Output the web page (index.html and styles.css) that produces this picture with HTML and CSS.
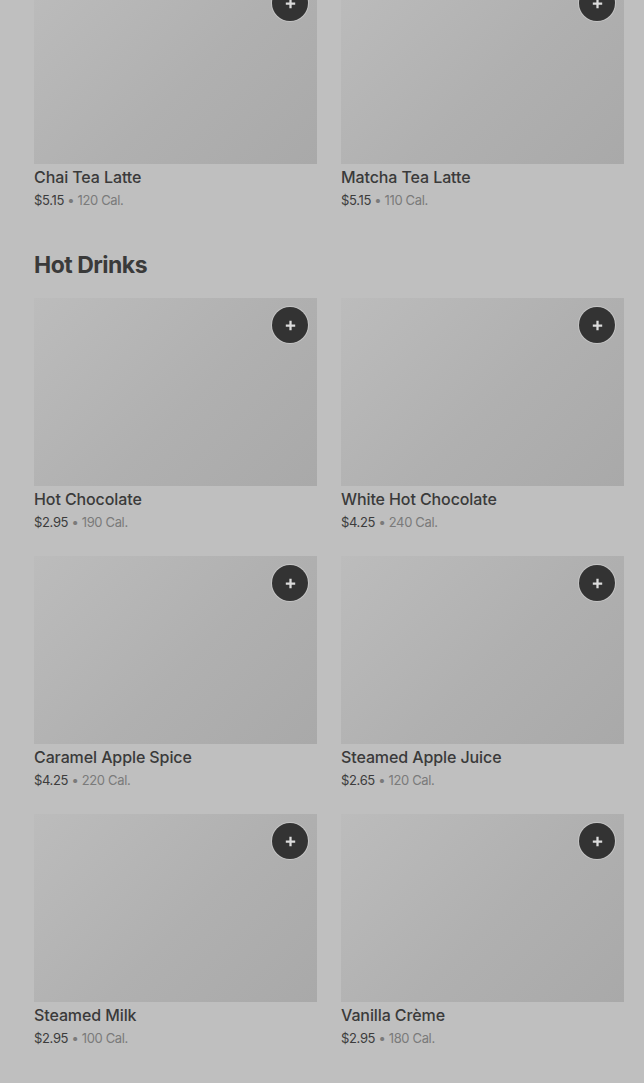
FILE: index.html
```html
<!DOCTYPE html>
<html lang="en">
<head>
  <meta charset="UTF-8">
  <meta name="viewport" content="width=device-width, initial-scale=1.0">
  <title>Menu</title>
  <link rel="stylesheet" href="styles.css">
</head>
<body>
  <div class="menu">
    <section class="section section-top">
      <div class="grid">
        <div class="item">
          <div class="thumb"><button class="add" aria-label="Add"><svg viewBox="0 0 16 16"><path d="M8 3v10M3 8h10"/></svg></button></div>
          <div class="name">Chai Tea Latte</div>
          <div class="meta"><span class="price">$5.15</span> • 120 Cal.</div>
        </div>
        <div class="item">
          <div class="thumb"><button class="add" aria-label="Add"><svg viewBox="0 0 16 16"><path d="M8 3v10M3 8h10"/></svg></button></div>
          <div class="name">Matcha Tea Latte</div>
          <div class="meta"><span class="price">$5.15</span> • 110 Cal.</div>
        </div>
      </div>
    </section>

    <section class="section">
      <h2>Hot Drinks</h2>
      <div class="grid">
        <div class="item">
          <div class="thumb"><button class="add" aria-label="Add"><svg viewBox="0 0 16 16"><path d="M8 3v10M3 8h10"/></svg></button></div>
          <div class="name">Hot Chocolate</div>
          <div class="meta"><span class="price">$2.95</span> • 190 Cal.</div>
        </div>
        <div class="item">
          <div class="thumb"><button class="add" aria-label="Add"><svg viewBox="0 0 16 16"><path d="M8 3v10M3 8h10"/></svg></button></div>
          <div class="name">White Hot Chocolate</div>
          <div class="meta"><span class="price">$4.25</span> • 240 Cal.</div>
        </div>
        <div class="item">
          <div class="thumb"><button class="add" aria-label="Add"><svg viewBox="0 0 16 16"><path d="M8 3v10M3 8h10"/></svg></button></div>
          <div class="name">Caramel Apple Spice</div>
          <div class="meta"><span class="price">$4.25</span> • 220 Cal.</div>
        </div>
        <div class="item">
          <div class="thumb"><button class="add" aria-label="Add"><svg viewBox="0 0 16 16"><path d="M8 3v10M3 8h10"/></svg></button></div>
          <div class="name">Steamed Apple Juice</div>
          <div class="meta"><span class="price">$2.65</span> • 120 Cal.</div>
        </div>
        <div class="item">
          <div class="thumb"><button class="add" aria-label="Add"><svg viewBox="0 0 16 16"><path d="M8 3v10M3 8h10"/></svg></button></div>
          <div class="name">Steamed Milk</div>
          <div class="meta"><span class="price">$2.95</span> • 100 Cal.</div>
        </div>
        <div class="item">
          <div class="thumb"><button class="add" aria-label="Add"><svg viewBox="0 0 16 16"><path d="M8 3v10M3 8h10"/></svg></button></div>
          <div class="name">Vanilla Crème</div>
          <div class="meta"><span class="price">$2.95</span> • 180 Cal.</div>
        </div>
      </div>
    </section>
  </div>
</body>
</html>
```

FILE: styles.css
```css
html, body {
  margin: 0;
  padding: 0;
  background-color: #bfbfbf;
  overflow: hidden;
}
body {
  font-family: Inter, "Noto Sans", Arial, sans-serif;
  color: #333;
  height: 1083px;
}
.menu {
  padding: 0 20px 0 34px;
  margin-top: -24px;
}
.section {
  margin-bottom: 39px;
}
h2 {
  margin: 0 0 17px 0;
  font-size: 23px;
  line-height: 32px;
  font-weight: 700;
  letter-spacing: -0.5px;
  color: #3a3a3a;
}
.grid {
  display: grid;
  grid-template-columns: 1fr 1fr;
  column-gap: 24px;
  row-gap: 24px;
}
.thumb {
  position: relative;
  height: 188px;
  background: linear-gradient(135deg, #bcbcbc 0%, #b0b0b0 55%, #a9a9a9 100%);
}
.add {
  position: absolute;
  top: 9px;
  right: 9px;
  width: 36px;
  height: 36px;
  padding: 0;
  border: none;
  border-radius: 50%;
  background-color: #333;
  box-shadow: 0 0 0 1px rgba(220, 220, 220, 0.5);
  display: flex;
  align-items: center;
  justify-content: center;
  cursor: pointer;
}
.add svg {
  width: 15px;
  height: 15px;
  stroke: #dcdcdc;
  stroke-width: 2.4;
  fill: none;
}
.name {
  margin-top: 3px;
  font-size: 16px;
  line-height: 20px;
  font-weight: 500;
  color: #3a3a3a;
  letter-spacing: -0.1px;
}
.meta {
  margin-top: 3px;
  font-size: 13px;
  line-height: 20px;
  color: #7a7a7a;
  letter-spacing: -0.35px;
}
.price {
  color: #3c3c3c;
}
```
